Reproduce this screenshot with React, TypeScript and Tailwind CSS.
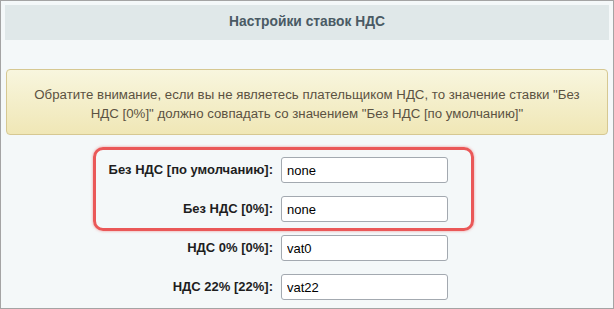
import React from 'react';

const rows = [
  { label: 'Без НДС [по умолчанию]:', value: 'none' },
  { label: 'Без НДС [0%]:', value: 'none' },
  { label: 'НДС 0% [0%]:', value: 'vat0' },
  { label: 'НДС 22% [22%]:', value: 'vat22' },
];

const App: React.FC = () => {
  return (
    <div
      className="relative w-[614px] h-[309px] overflow-hidden border border-[#a4a4a4] bg-[#f4f8f9] p-1 text-[13px]"
      style={{ fontFamily: '"Liberation Sans", Arial, sans-serif' }}
    >
      <div className="flex h-[35px] items-center justify-center bg-[#e0e8e9] text-[13.8px] font-bold text-[#4a5a64]">
        Настройки ставок НДС
      </div>

      <div className="mx-px mt-[29px] flex h-[66px] flex-col items-center justify-center rounded-[4px] border border-[#d6c892] bg-gradient-to-b from-[#f8f6de] to-[#f0e7b6] px-6 pt-[3px] text-center text-[13.25px] leading-[19px] text-[#5b5242]">
        <p>Обратите внимание, если вы не являетесь плательщиком НДС, то значение ставки "Без</p>
        <p>НДС [0%]" должно совпадать со значением "Без НДС [по умолчанию]"</p>
      </div>

      <div className="mt-[22px] flex flex-col gap-[13px]">
        {rows.map((row) => (
          <div key={row.label} className="flex items-center">
            <label className="w-[268px] text-right font-bold text-[#1e1e1e]">{row.label}</label>
            <input
              readOnly
              value={row.value}
              className="ml-2 h-[26px] w-[167px] rounded-[3px] border border-[#a3a9b0] bg-white px-[5px] text-[13px] text-black outline-none"
            />
          </div>
        ))}
      </div>

      <div className="pointer-events-none absolute left-[92px] top-[146px] h-[84px] w-[381px] rounded-[10px] border-[3px] border-[#ea5858] shadow-[0_0_3px_rgba(234,88,88,0.6)]" />
    </div>
  );
};

export default App;
